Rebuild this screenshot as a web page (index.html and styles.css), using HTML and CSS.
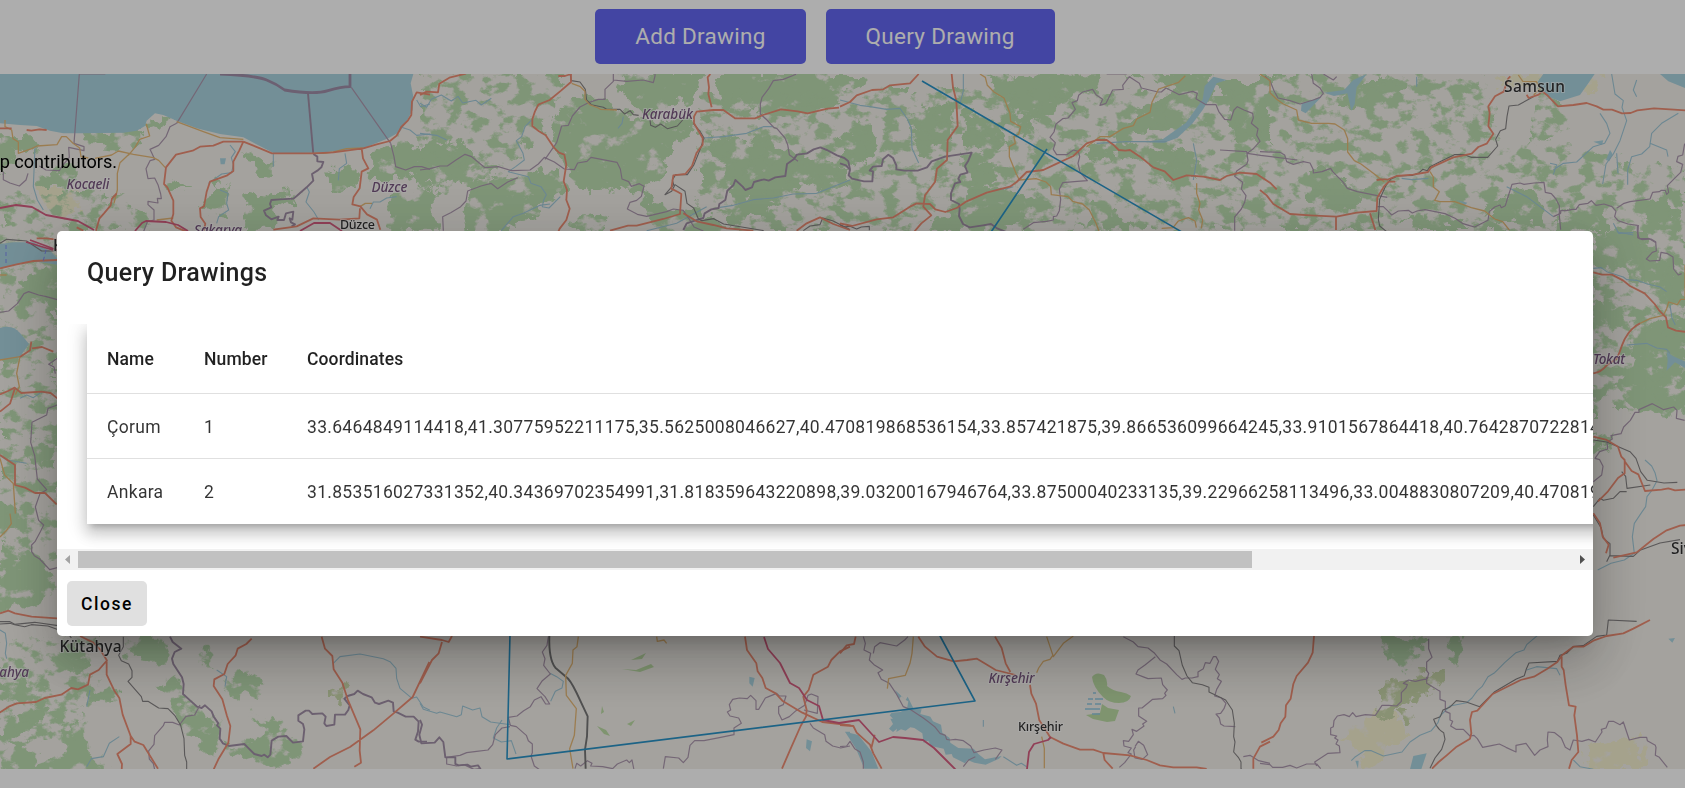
FILE: index.html
```html
<!DOCTYPE html>
<html lang="en">
<head>
<meta charset="utf-8">
<title>Query Drawings</title>
<link rel="stylesheet" href="styles.css">
</head>
<body>
<div class="page">
  <header class="toolbar">
    <button class="tool">Add Drawing</button>
    <button class="tool">Query Drawing</button>
  </header>
  <main class="map">
    <svg class="canvas" viewBox="0 74 1685 695" preserveAspectRatio="none">
      <defs>
        <filter id="dense" x="0" y="0" width="100%" height="100%">
          <feTurbulence type="fractalNoise" baseFrequency=".07" numOctaves="4" seed="4" result="n"/>
          <feDisplacementMap in="SourceGraphic" in2="n" scale="24" xChannelSelector="R" yChannelSelector="G" result="d"/>
          <feTurbulence type="fractalNoise" baseFrequency=".045 .06" numOctaves="5" seed="9"/>
          <feColorMatrix values="0 0 0 0 0  0 0 0 0 0  0 0 0 0 0  9 0 0 0 -2.6"/>
          <feComposite in="d" operator="in"/>
          <feGaussianBlur stdDeviation=".5"/>
        </filter>
        <filter id="sparse" x="0" y="0" width="100%" height="100%">
          <feTurbulence type="fractalNoise" baseFrequency=".07" numOctaves="4" seed="7" result="n"/>
          <feDisplacementMap in="SourceGraphic" in2="n" scale="26" xChannelSelector="R" yChannelSelector="G" result="d"/>
          <feTurbulence type="fractalNoise" baseFrequency=".06 .085" numOctaves="5" seed="3"/>
          <feColorMatrix values="0 0 0 0 0  0 0 0 0 0  0 0 0 0 0  8 0 0 0 -3.9"/>
          <feComposite in="d" operator="in"/>
          <feGaussianBlur stdDeviation=".5"/>
        </filter>
      </defs>
      <rect class="land" x="0" y="74" width="1685" height="695"/>

      <!-- farmland -->
      <g class="farm" filter="url(#dense)">
        <path d="M36 186l40 2 6 24-32 4zM1490 74h112l-8 18-90-6zM1586 746l52-10 10 33h-60zM1340 735l50-30 20 30-40 30z"/>
      </g>

      <!-- woodland -->
      <g class="wood" filter="url(#dense)">
        <g transform="scale(.33333)">
          <path d="M740 590l120-28 0 36 50-20-75 50 0 40-40 24-60 0zM1170 692l-5-72 35-40 110-25 0 137zM1115 450l50-10 40-45 30 45 70 20 0 45-120 35-80 0zM985 510l85-5 0 55-60 15zM110 525l120-35 0 50-110 25zM0 400l90 0 30 40-60 20-60 60zM230 400l200-10 0 30-70 20-110-10zM500 545l75 15-60 22zM730 460l90 30 0 32-50-5zM640 550l50 10-10 80-70-10zM430 365l70-20 20 20-60 20z"/>
        </g>
        <g transform="translate(420 0) scale(.33333)">
          <path d="M0 430l100-10 60 40 70 60-90 20-140 20zM150 570l90-40 90-10 90-20 20 70-80 60-100 60-140 0zM380 400l60-100 60-20 150 70 180 20-50 50-40 50-20 60-40 40 20 50 170 20 40 40-20 30-160 0-40-60-30-70-60-20-80 20-40-20zM580 222l260 0-20 80-150 40-60-60zM880 222l380 0 0 90-140 20-100 10-100-20zM850 430l180-20 100 50 160 50 0 60-130-20-120 60-100-20-30-80zM450 650l80-10 40 50-110 2zM930 620l100-30 60 30-160 60z"/>
        </g>
        <g transform="translate(840 0) scale(.33333)">
          <path d="M0 420l60-60 40 20 30 40-40 60-90 20zM220 340l100-30 20 60-40 80-70 10zM440 230l340-8-20 50-70 0-30 50-70 40-40 40-40-80-30-40zM370 330l80 40 60 30 10 30-60 40-80-30zM840 222l280 0-20 80-60 70-100 30-140 0 140-80 60-60-40-20zM1130 240l160 0 0 190-100-10-20-90zM720 450l170-20 160 30 20 80-90 0-110-70-110 10zM270 692l80-80 60-60 100 20 90 30-60 60-140 30zM760 600l110 70 0 22-120-20zM370 470l110 20-10 50-70 30zM0 222l80 0-20 40-60 20z"/>
        </g>
        <g transform="translate(1260 0) scale(.33333)">
          <path d="M150 500l60 20 50 40 90 20-60 30-100 20-40-10zM300 240l130 0 0 50-120 40-70-20zM420 660l100-20 130 50-200 0zM690 630l50-60 80 10 30 50 0 52-90-20-90-10zM890 650l140-40 20 80-160 2zM1140 610l80-10 50 90-100 0z"/>
        </g>
        <g transform="translate(0 225) scale(.33333)">
          <path d="M60 180l60-50 110-20 0 150-110-30-60-20zM-10 830l40 0 40 50-20 30-60 0zM0 1010l60-40 90 60 20 60-70 60-60-20-60 60zM100 640l60 30-30 60-50-20z"/>
        </g>
        <g transform="translate(0 620) scale(.33333)">
          <path d="M370 50l110 0 30 40-40 40-90-20zM460 210l70-50 20 80 80 40 30 80-20 50-50-60-50-20-10-70-40-40zM680 180l60-30 60 50-20 40-90-20zM750 280l100 30 10 40 50 20-10 60-110 0-100-30-20-30 90-10 40-30zM-20 180l80 0 60 60-120 0zM60 260l90 10-30 60-100 20zM0 390l90 0 20 40 70-20 20-80 50-30 20 100 50 50-60 20-240 0zM160 80l80 0 30 60-80 20zM590 90l40 10 10 50-40-10zM260 195l80 15 0 35-70-5z"/>
        </g>
        <g transform="translate(1260 620) scale(.33333)"><path d="M370 40l120 10 0 40-60 50-50-20zM560 40l60 0-10 60-20 40z"/></g>
        <g transform="translate(1400 225) scale(.33333)">
          <path d="M580 20l140 0 60 80 80 50 0 100-60-20-80-70-80-40-60 0zM690 290l170-20 0 300-180-20-40-70 60-60zM580 230l80 20-20 60-60-20zM580 500l70-10-40 40-30 0zM580 640l60-20-30 50-30 10z"/>
        </g>
      </g>
      <g class="wood" filter="url(#sparse)">
        <path d="M420 74h150l-30 60-60 60-60-10zM700 90h560v141h-560zM1260 74h220l20 60 50 50 40 47h-330zM1500 150l60-10 60 20 65 10v61h-140zM1593 231h92v180h-92zM0 190h90l60 20v21h-150zM0 231h57v330h-57zM1540 84l40 40-50 20zM0 637h100l-20 100-80 10zM30 400h28v110h-28z"/>
      </g>
      <g class="scrub" filter="url(#dense)">
        <path d="M1380 685l40-10 25-8-5 20-35 18-25 16zM1400 710l14-4-6 20zM328 690l16-6-4 20z"/>
      </g>
      <g class="heath">
        <path d="M1092 677q4-6 12-2 4 5 3 11 6 5 14 6 6 1 10 4-2 7-12 7-10 0-16-6-10-10-11-20zM1086 715l14-2 2-9 6 4 11 2-4 11-8 1-14-3zM631 660l15-7-4 6zM622 669l14 1 15-6 3 3-14 5zM597 726l9 4 4 6-6-2zM627 724l8-4-4 6zM602 706l2 6-3 2z"/>
      </g>

      <!-- water -->
      <g class="water">
        <g transform="scale(.33333)"><path d="M0 222H1240L1232 250 1240 290 1238 330 1222 360 1200 395 1165 415 1090 445 960 458 822 460 730 412 660 402 590 385 530 362 490 345 465 340 440 362 435 378 410 392 370 398 250 400 190 400 150 392 110 378 60 375 0 370zM660 475l18 0-4 18-12 0zM0 732l40-5 60 0 50 25 22 22 0 20-70-10-104 20z"/></g>
        <path d="M0 328q12-4 20 5l9 11-10 14-19 2z"/>
        <g transform="translate(1260 0) scale(.33333)"><path d="M850 222H1004L985 250 960 285 900 304 860 288 830 250zM1200 222h75v42l-50-20zM280 240l40-18-30 40-6 50-10 20-12-52-40 8-30-10 60-8zM125 310l60-20-48 50-14-8zM1000 425l30-4-4 14zM590 600l32 8-6 6zM1050 450l8 12-10 22-10-4z"/></g>
        <g transform="translate(840 0) scale(.33333)"><path d="M1120 230l40 10-30 10-26 54-16 26-30 40-46 44-40 14-60-2 56-8 70-50 50-70 6-40z"/></g>
        <g transform="translate(840 620) scale(.33333)"><path d="M165 210l12 26 8-8 12 12 6-10 18 36 24 2-4 14 30 8 8 14 24 10 4 24 22 16 2 14 24 16 46 2 14 16 20 16 50-10-8 8-40 18-34-6-20-8-8 10-36-18-4-10-18 2-6-18-38-8-8-16-14 6-4-28-24-16-12-2-14 10-14-4-14 8 2-10-12 10-12-10 12-14-8-16 8 0-10-10 6-8 26-2 20-10 4-22-8-4zM15 335l40 10 40 50 20 51-42 0-25-60z"/></g>
        <g transform="translate(1260 620) scale(.33333)"><path d="M460 408l40-8-16 48-34 0zM286 422l10 0-2 24zM1225 56l20-2-8 14z"/></g>
        <g transform="translate(420 620) scale(.33333)"><path d="M988 170l16 4-6 26-10-10zM1160 358l16 6-6 30-12-10zM1276 335l14 0 0 18z"/></g>
        <g transform="translate(1400 225) scale(.33333)"><path d="M800 380l20 14 40 18 0 20-35-20-25 25 3-30z"/></g>
      </g>
      <path class="marsh" d="M1088 699h5M1095 699h8M1087 704h5M1095 704h6M1085 709h15M1092 714h8M1093 693h3"/>
      <g class="stream">
        <g transform="scale(.33333)"><path d="M690 435l16 20-12 18 6 20-5 25-30 4-40 28M660 570l24 10-4 30 6 20-30 20-6 20M1035 460l5 30-22 16-3 35M1190 590l-30 4-20 12-20 0-10 20M920 560l8 16-10 30 24 30 14 24M1250 300l12 20 28-8M1200 380l30 10 20 16 40-4M105 440l-5 120 12 40 18 30M820 460l0 40"/></g>
        <g transform="translate(420 0) scale(.33333)"><path d="M0 310l20 12 14-24 30-13 30 18 20-14 14 20 40-8 16 14 30-20M335 360l-20 20-10 30-16 12 20 38 4 20-26 20-22 15 60 15 8 20 30 10 16 24-8 16-4 20 20 4 34-34M390 612l-30 4-50 24-30 10-36 42M0 400l50 6 30 14M1060 380l-30 0-50 20-70 10-60 4M1290 540l-40 16-60 24-70 2-60 12-60 5-60 17-40 6M680 692l90-22 90-50M610 350l-4 20-12 15"/></g>
        <g transform="translate(840 0) scale(.33333)"><path d="M370 222l0 50-10 40M0 300l60 16 30 4 50 8 40-3 22 32 12 28 2 60 20 44M520 560l-20 6-40 4M1060 540l10-60-10-50M980 425l-120 0-90 5"/></g>
        <g transform="translate(1260 0) scale(.33333)"><path d="M1055 222l10 60 25 20-4 20 14 40-20 60-20 40-22 30-10 60M1020 340l20 30 10 30-16 30-34 10-50 46-40 4-30 20M1255 340l-50 30-30 30-6 40-24 22-30 8-12 40 0 44M740 560l60 30 80 60M1130 240l-10 30 10 20M470 230l0 30M1060 670l16 30 44-2M1170 430l50 20 4 20M425 535l30 4 50-4M1070 460l4 60M870 490l20 4-10 30"/></g>
        <g transform="translate(0 225) scale(.33333)"><path d="M0 690l20 15 60 10M60 520l20-10 20 8 20-14 20-4"/></g>
        <g transform="translate(0 620) scale(.33333)"><path d="M0 30l16 10 4 30-4 30 4 16M260 440l14-24 36-6 18-40 30-20M1000 130l20-20 60-8 70 14 20 9 18 20 2 30 10 30 36 30 14-4 20 30 20 10M675 200l5-30-30-20M270 210l-10 50"/></g>
        <g transform="translate(420 620) scale(.33333)"><path d="M0 250l10 18 40 12 10-4 50 14 14-6 4-26 30 12 22-6 6 26 26 16 60 8M246 300l-16 24-10 30 24 12 30-4 14 40M390 160l20 10 20 14-4 20-20 10-14 30"/></g>
        <g transform="translate(840 620) scale(.33333)"><path d="M490 410l40 26 14-6 16 10M1000 260l5 20M430 300l0 20"/></g>
        <g transform="translate(1260 620) scale(.33333)"><path d="M840 40l-40 34-8 16-24 8-34 30-20 20-10 10-20 12-18 30-14 12-16 22-16 14-50 10-30 30-6 20-20 24-34 14-30 20-24 30-56 12-36-16-20 0-30 20-10 10M800 150l30-10 60 6 10 20M940 420l20 20 40 8"/></g>
        <g transform="translate(1400 225) scale(.33333)"><path d="M580 130l24-2 16 12 50 16 10 8 30 2 30 10 40 10 20 14M680 360l60-5 30 14 30 4 10 12M735 705l20 18 10 20 6 24-16 30-14 18-4 30-14 20-20 30-6 40 6 50-30 20-40 10-40 20M810 240l6 40 10 20M650 20l50 10"/></g>
      </g>

      <!-- province borders -->
      <g class="border sea">
        <g transform="scale(.33333)"><path d="M238 222L222 430M620 222L530 370M1054 262L1172 430M240 222l76 0"/><path class="thick" d="M660 222q110 5 140 18 30 12 54 30 90 15 130 2 40-12 66-12V222"/><path class="wide" d="M924 280L940 462"/></g>
      </g>
      <g class="border">
        <g transform="scale(.33333)">
          <path d="M222 430l30 10 0 12-46-10 2 30-20 24-10 16-40-2-20-12M10 515l0 24 20 10 28 9 20-18 6-20M530 370l-20 10-12 30-22 26-26 12 5 10 9 20-14 4-12 24 6 30 20-2 10 20 8 28 2 14-12-1 2 14-30-5 0 10 18 16 0 30-20 5-14 37M1172 430l10 40 5 30 30 10 26-10 22 0 25 8"/>
          <path class="wide" d="M940 462l12 8 0 14 18 2-6 16-12 10-16 10 4 20-20 20-30 26-10 8-40 2-26 2-4 12 4 10-22 10 6 14 16 12 22-8-4 10 20 0 6-20 22-5-3 24-8-4 4 12 12 6-10 6"/>
        </g>
        <g transform="translate(420 0) scale(.33333)">
          <path d="M0 510l30-4 30-8 22 0 26-18 27-17 20 7 40 33 40-3 40 12 55-2 25-18 18-20 30 14 30 21 30 2 10-20 28-5 12-12 78 15 10 20 5 30 20 8 8 14 24-8 14 8-8 30-14 12-20 6-8 20 30 16 28 6 60-14 20-8 30 4 20 30 12 20 28 12M375 478l35-50 15-50 20-2 12-28 23-27 25-13 30-10 20 0 0-30 25-24 0-26M580 240l40 4 50-4 30 8 5-20 0-6M70 692l-2-42 24-12 30-18 16-17 5-30 40-15 30-8 20 16 30-20 30-13M1130 222l-40 16-30 4-14 24-20 26-5 20 0 30 20 18 20 22 10 4 24 28 8 20 5 30 26 20"/>
          <path class="wide" d="M790 690l10-20 36-12 14-4 4-14 20-12 22-4 2-12 18-12 6-28 18-16 6-16 22 20 8 10 20-8 6-16 30-8 14 4 20-10 30-4 5-36 20-14 10-14 30-4 20-12 20-6 20 8 30 16 22 8 12 10 5 24"/>
        </g>
        <g transform="translate(840 0) scale(.33333)">
          <path class="wide" d="M0 490l18 6 12 14-4 16 10 10 36 8 25 0 2-30-10-2 10-12 26-2 4-20 16-14 14 10 10 22 0 12 24 4 40 0 28-10 14-18 40-14 80-12-10 24-10 16 8 20-22 6-6 12 6 10-16 4-12 30 0 20 24 12 2 16-2 20 12 24 20 10 40-6 24-4 20 14 40 16 10 0"/>
          <path d="M550 688l30-20 40-4 20-4 0-10 10-2 8-16 4-34-4-30 10-20 44-4 30-2-22-26-6-26 5-20-4-16-15-4-20 14-30 0-10-16 6-20-16-16 12-16 6-24 20-16 16-2 22-26-10-20 16-6 4-16 12-10 30-8 10 16 20 14-8 18 18-6 20-40 32-2-2-12 20-26 30 20 6 14 50 12 10 0 14-12 40 20 40-10 14 6-4 16 30 18 30 0 8 20 18 24 18 2 10-30 10-10 20 10 26 10 2 14-6 16 20 16-4 20 10 18-22 24-16 12 40 6 110 14M1140 450l80 5 4 26-4 12-30 20-6 16 24 18-4 20 14 20-4 20-10 20-20 24 0 41M800 222l60 0"/>
        </g>
        <g transform="translate(1260 0) scale(.33333)">
          <path d="M0 455l60 2 14 8 6 20 20 8 30-8 20 4 10 20 0 10 26-4 26-10 6 10 30 30 14 20 30 10 60 12 30 5M350 620l20 0 15 14 10 11 20-12 30-2 12 8 14-6 24-4 60 12 30 14 24 16 20 6 15 4 40-20 4-26 16-14 16-6 4 8 12-6 6-20 14-44 24-4 12 4 30-4 30-2 4 30 18 4 14 16 10 20 0 30 4 42M880 650l22-10 0-8 16 0 20-4 10 0 10-14 26-4 10-8 14 14 24-4 24 8 12 14-4 16 10 12 30 10 28 4 0 20 6 20 30 0 20 12M1070 625l20-14 20-6 60-8 8-20 20-2 6-4 12 0 4 12 6-6-4-20 30-30 10-10 6-24-18-8 4-16 14-4 6-34M155 222l5 28 20 14 10 16-10 12-20 8-40 12-30-10-36-8-12-22-12-30-16-14M190 222l30 18 10-10"/>
        </g>
        <g transform="translate(0 225) scale(.33333)"><path d="M0 262l26-4 26-22 20-30 14-6 30 10 20 4 36 10M172 540l-28 10-4 20-44 22-4 60 12 40 8 70 28 32-20 12-14 40 10 40 15 14-10 20-16 30-10 10 0 20 8 12 16 10 30 32 23-6M172 400l-26 18 16 8 4 20"/></g>
        <g transform="translate(0 620) scale(.33333)">
          <path class="wide" d="M510 50l8 16 26 20-20 10-8 20 4 16 26 40 5 20-2 30 22 20 20 18 14 4 10-8 20 18 6 16 14 20-4 6 10 10-2 30 10 14 18 8 46-6 10 10 20 20 22 6 8-4 10 8 8-8 4-42 20-12 24-2 6 6 14 14 30-4 4-36-4-16-14-10 0-16 22-14 10 0 10 10 30-2 10 10-4 20 6 8 24-4 2-30 30 0 10-14 4-14-16-20 10-8 20-6 10-10 16 10 26 10 10 16 12 4 28-10 14 6 2 26 12 4 24 12 24 0 15 15-2 30-8 24 10 6 25 0"/><path d="M600 255l-16 30-26 4-20 26-20-8-24 0-4 10-26 30-2 26-16 20 2 24 12 14 4 18"/>
        </g>
        <g transform="translate(420 620) scale(.33333)">
          <path d="M385 50l-4 26-14 20 8 20-4 20 20 26-24 20-16 24 24 24 14 22-12 0-14-22-20 10-12 20-20 12-20 16-26 4 6 24 18 4 30 26 6 16 12 10 0 26-4 10 10 30 20 14M270 320l-24 4-20 20-8 30-14 16-34 4-30 4-20 8-40 6 0 20 30 6 22-4 30 14 16-2M465 446l5-16 12 8 20-16 14 8-4 8 36 2 30 6 14-14 28-12 8 8 8-8 6 30M730 446l6-36 40 4 14 14 14-16 6-36 14-14 28 0 50-10 40-8 0-20 22-14-8-16-26-6-8-12 10-6-4-16 10-16 20-4 24 2 10-10 16 16 0 26 8 0 20-34 10-4 24-10 8 8 20 0-8 26-14 6 0 20 10 20 22-10 20-18 26-16 10-30 10-4 20 8-2 50-40-10M1170 310l10 14 34 20 4 20 20 14 24 6 28-6"/><path class="wide" d="M0 300l6 14-8 30 6 26 40-2 14-16 12 14 6 46 30 0 0 20 10 4 26-2 10 6 22-4 8 12"/>
        </g>
        <g transform="translate(840 620) scale(.33333)">
          <path d="M70 50l6 20-4 20 20 10-4 20 14 14 26 16-14 8 10 20 24 12 20 30 22 40 20 8 40 26 34 26 16 20 16 6 4 12 10 2 16-2 24 4 22 16 10 20 30-8 34-6 20 6-20 28M100 100l4-20 16-12 50 10 24-18 10-10M0 380l20-2 10-14 14 22 16 10 10 30 0 20M370 440l16-20 20-10M850 50l30 16 14 14 30 4 20 16 16 20 20 12 30 32 16 14 10-4 20 0 18-4 0-14 16-10 6-18 14 2 10-20 8 0 8 14-10 24 12 16-6 12 12 8-14 24-6 20 20 6 14 16-6 16-10 14-14 2 10 12 4 18 10 6 34 2M946 110l-30 24-22 16-6 12 20 8 16 6 40-2 4 20 14 16-8 10 4 6-10 10-30 2-32 26-10 0 0 24 24 16-12 8 4 6-22 16-14-6 4 16-14 20-16-2 2 16 22 6-10 14 10 4-20 26-16 14M885 380l10-16 16 12 12 28-16 14-22-4-4-24 6-10M1210 410l20-4 26 16 34 8"/>
        </g>
        <g transform="translate(1260 620) scale(.33333)">
          <path d="M0 430l30 4 8 8 30 0 22-6 20 8 30-12 30 0 12 14M170 438l-6-12 40-26 36-2-2-20-10-6 6-12-10-6 6-6-18-4 0-20 8-4 2-18 10-14 20-4 16 6 10-12 10 12 28-6 30 2 20-30 20 0 24 2 14-14 0-26 14-14 4-10-12-4 16-10 20 4 36-8 4-16-6-8 0-26 16-14-10-26 0-30M500 170l0 20 40 24 0 24 16 6 0 30 14 6 0 20 8 4-6 14 16 10 22 0 20 20 12-2 10 10 16 26 30-6 20-4 20 10 30 14 0-20 30-6 26 36 16-16 24-10-2-20 2-24 20 2 20 16 12 28 14 8 10-30 26 4 20-6 20 8 20-30-2-8 14-4 8-20 14 0 20 10 10-8 10 30 8 24 32-8 20 0 2 10 24 14 2 6-2 24 12 6 24 30"/>
        </g>
        <g transform="translate(1400 225) scale(.33333)"><path d="M580 770l25-20 4-26-10-20-14-4 14-20 24-8-2-20 16-10-4-10 30-6 8-20 20-20 14-24 12 0 0-8 40-18 34 18 30-8 10 10-2 24 25 6M715 0l-2 38 14 6 26-2 14 8 2 28-12 4-18 20 10 6 30-2 4-24 20 4 16 10 2 36 14 18 10-4"/></g>
      </g>

      <!-- rail -->
      <g class="rail">
        <g transform="translate(420 0) scale(.33333)"><path d="M450 222l4 20 26 4 16 22 4 32 14 14 36 8 10 6 40 0 14 14 16-10 10 12 16 2M690 360l2 16 14 6 16-10 20 14 30-8 16-18M820 370l20 24 12 20-10 30-20 50-20 30-35 0-10 16 4 14-26 30 20-10 10-20 30 20 6 36 20 14 14 32 10 6 36-6 30 16 120 20M1150 692l20-14 30-4 8-20 30 8 50 26"/></g>
        <g transform="translate(840 0) scale(.33333)"><path d="M0 675l10 6 20-2 20 8 14-6 24-2 0 12"/></g>
        <g transform="translate(1260 0) scale(.33333)"><path d="M820 290l-45 25-28 3-6 32-4 36-16 6-14 26 6 20-30 34-50 0-20-8-30 0-40 20-33 16-8 12-14-4-10 10-20 8-46 2-20 10-15 20-18 40-4 60 4 20 20 16"/></g>
        <g transform="translate(0 225) scale(.33333)"><path d="M0 55l20-12 60 5 45 30 47 0M0 1190l30 0 14 8 60-6 70 10"/></g>
        <g transform="translate(0 620) scale(.33333)"><path d="M0 12l30-2 14 4 30 6 20-6 50 4 60 22 10 14M370 50l0 30-14 26 8 16 22 10 10 20 0 20-12 12 40 46 4 14 16 0 32 20 28 2 20 20 18 30 10 40 2 50 6 20 0 40"/></g>
        <g transform="translate(420 620) scale(.33333)"><path class="main" d="M388 48q-2 70 18 95l30 26q14 8 34 50l33 70-2 60-6 40 2 57"/></g>
        <g transform="translate(840 620) scale(.33333)"><path d="M1003 48l0 30 14 14 10 44 14 32 16 20 30 6 20 8 0 14 30 14 20 10 20 30 6 40-2 40 4 16-4 30 14 16 8 14 0 20 10 10"/></g>
        <g transform="translate(1260 620) scale(.33333)"><path d="M1130 4l-85-4-5 45-30 4-40 28-30 3-20 20-20 6-8 18-85 5-8 18-6 20-24 10-65 38-25 25-20 20-40-14-30-4-20 20-20 8-8 20-20 8q10 30 30 40l4 20-10 30-20 26-15 31"/></g>
        <g transform="translate(1400 225) scale(.33333)"><path d="M580 645l40 6 30 12 40 17 18 20 14 40 20 26 50 8 40-2M665 740l12 14 4 36 70-10M580 845l20-25 10 6 30-6 20-20 20 0M580 870l24 40 6 30 20 16 0 36 70 2 20-18 60-22 60-10M630 990l-10 20"/></g>
      </g>

      <!-- secondary roads -->
      <g class="second">
        <g transform="scale(.33333)"><path d="M15 360l0 20 20 10 4 26 16 10 0 34 40-14 16-8 60-4 14-24 14 0 20 20 20 14 4 26 22 4M285 475l50-10 20-12 45 10 60 10 16 8 20 22M385 466l20-24 14-24 30-10-10-36M390 460l-30 28-8 32 0 50-10 40M530 365l80 30 50 18 70 5M940 460l30 0 30-4 40-10 50-2M470 660l50-6M1080 620l16-10 20 0"/></g>
        <g transform="translate(420 0) scale(.33333)"><path d="M455 250l26 10 14 14 0 24 14 16 26 10 6 4 50 2"/></g>
        <g transform="translate(840 0) scale(.33333)"><path d="M420 222l16 10 6 24 20 20 30 18 18 46 2 24 30 16-6 22-14 8 4 20-18 10 0 30 20 50 10 20 50-4 30 10 14 14 2 24 50 6 14 14 30 8 20 18 20 40 12 32M740 440l40-30 30 0 40-25 30-8 10-20 40-20 6-30 20-40 60-20 20-20M1070 550l0 30 10 30-4 20 12 30-4 25M965 685l34-2 16-20 30-10 20 10 4 20"/></g>
        <g transform="translate(1260 0) scale(.33333)"><path d="M0 222l30 20 0 36 20 20 20 14 40 18 5 30 40 10 50 0 20 2 28 18 10 26 0 40 20 26 20 10 40 30 30 24M510 515l10 16 0 30 18 14-14 26 16 4 44 0 50 18 40 10 30 24 24 8 20 25M775 225l14 20 40 0 12 20-20 20"/></g>
        <g transform="translate(0 225) scale(.33333)"><path d="M0 405l60-10-10 50 8 40-12 24M0 700l14 50 26 26 6 90M30 866l4 30-14 20-20 20M0 150l20 0"/></g>
        <g transform="translate(420 620) scale(.33333)"><path d="M475 50l-4 30-12 10-2 40-20 36 2 60 30 40-6 80-14 40 10 60M710 50l2 14 20-4 8 10"/></g>
        <g transform="translate(840 620) scale(.33333)"><path d="M220 50l-4 50-6 30-14 36-50 10-4 30M620 50l20 60 30-40 30-22M640 104l-10 14-20 6-14 20-6 14M605 350l8 35 0 60"/></g>
        <g transform="translate(1400 225) scale(.33333)"><path d="M720 295l30-14 40-10 10-20 6-20 26 8 10-16 20 0M855 220l0-100"/></g>
      </g>

      <!-- primary roads -->
      <g class="prime">
        <g transform="scale(.33333)"><path d="M0 385l35 0M80 390l14 2 24-4 22 2M730 425l-12 26-18 34 0 28-20 14-50 18-10 30-8 44-12 6 2 26 14 20-4 20M730 425l50 20 36 15 65 0 59 0 60-3 90-12 40-12 40-10 20-16 14-26 20-20 10-16 2-40 14-28 40 7M730 425l-60 0-30 12-40 3-22 12-50 12-30 38-6 50 10 10 18 40 0 40-6 20 14 20 40 16M1085 445l4 30 16 30-20 10-6 50-18 26-4 22 24 6 20 24 30 16 10 30M350 580l-14 16-4 20-20 24-14 16-10 36M1080 625l-2 30-60 4-78-4-50 24-70 10M230 682l20 10"/></g>
        <g transform="translate(420 0) scale(.33333)"><path d="M0 285l20-10 34 2 4-26 30-18 50-12M415 228l20 0 18-6 0 24-30 26-34 28-34 14-10 20-8 24 0 20 20 16 20 12 24 36 16 16 16 6 6 30-8 50 10 26-2 30 10 26-10 34-20 26-8 18M570 692l54-15 26 0 80-20 50-15 4-60-10-6-20-10 6-40 36-4 20-24 14-40 18-24 0-20-26-44 0-20 8-15 50-5 30 0 35 25 60 0 24-10 54-17 50 6 30 6 60-14 34-3M875 322l-10-40 2-20-4-30 8-10M1130 692l30-22 40-18 40 20 50 18M790 640l40 24 50 11 40 10 80 7"/></g>
        <g transform="translate(840 0) scale(.33333)"><path d="M0 320l30-14 20-20 46-16 34-2 20-12 60-6 26-28M335 222l4 40 10 40 4 76-30 42-2 60-30 26-6 40-30 40-5 34 24 26-30 24-22 26M0 670l36 8 74-20 50-6 50-32 20-10 40 2 16 16 30 8 34-12 30-20 60-26 70-18 20-14 30-30 50-6 34-16 56-26 40-38 30-10 30 0 20 14 16 16 20 2 14-2 30 20 40 32 34 12 26 26 40-14 50 4 50 10 20-12 40-10 50 4 40 26 20 20"/></g>
        <g transform="translate(1260 0) scale(.33333)"><path d="M0 570l20 16 20 26 50 30 60 4 80 4 60-12 60-5 2-40 20-34 14-14 20 0M330 640l16 50M228 650l0 40M350 540l16-2 14 0M380 540l30-12 50-4 44-8 10-14 66-30 30-6 25-5 20-20 25-10 20-30-15-22 4-40-4-20 20-30 26-14 14-40 6-6M800 284l6 10 30-10 10-10 14 10 34 35 46-4 40-6 30 10 20 10 26 0 30 11 26-1 20-8 50-6 60 4 34 2"/></g>
        <g transform="translate(0 225) scale(.33333)"><path d="M0 130l50-12 50-10 72-3M110 40l30 0 30 4M0 508l24-10 20-10 20 16 60-4 28 4 20 16M0 560l30-24 14-44M0 690l45 30 0 60 30 8 30 16 30 0 35 34M60 396l30-20 4-26M96 370l30-4 34 14M0 1165l25-8 20 8 50 10 76 5"/></g>
        <g transform="translate(0 620) scale(.33333)"><path d="M240 48l40 20 20 20 20 32 0 44 24 50 14 20 10 50 24 64 0 24-40 30 14 30-2 36M390 345l14 20 26 10 44 71M322 120l-26 30-26 14-6 30-30 14-20-4-30 20-50 10-26 12-58 4-24 10-30 20-16 20M755 56l-16 16-26 14-6 20-24 26-10 30-30 16-2 20 26 40 14 50 10 30-6 50-30 50-14 30 0 16M965 50l10 36 22 22 4 40 26 40 16 50 38 90-2 64 4 36-20 12M940 446l50-35 60-30 70-50 60-50 58-50 50-105"/></g>
        <g transform="translate(420 620) scale(.33333)"><path d="M0 190l36-70 20-20 10-34M0 50l66 10 20 6 10-18M975 50l6 40 28 40 4 24 14 20 10 30 30 16 20 22 60 36 60 28 85 10M1290 80l-30 14-26 26-10 20-44 24-14 46-16 20 10 40-2 20-16 28-30 68-26 60"/></g>
        <g transform="translate(840 620) scale(.33333)"><path d="M0 100l20-24 22-4 5-22M235 50l20 30 36 30 50 14 40-4 30-4 30 18 26 16 60 15M465 50l20 34 12 46 14 26M570 195l4 26 14 30 10 50 26 40 6 10 40 20 50 18 40 0 30 10 80 7 50 14 40 16 40 6 70 0 30 5M790 400l4 20 24 26M0 315l40 3 10 20 40 36 10 26 25 46M104 344l-10 40M1240 446l0-30 20-36 30-15"/></g>
        <g transform="translate(1260 620) scale(.33333)"><path d="M162 48l-4 50-14 30-34 40-10 24-8 44-14 20-2 34-14 20-6 20-16 20-36 18M1170 0l-50 26-30 14-50 8-40 14-30 18-30 0-34 26-14 20-30 20-40 24-40 10-60 30-24 12-46 50-16 4-6 24 4 40-4 16-40 24-30 26-24 20-20 20M905 110l0 30 6 10 6 46 10 60 20 4-4 26 8 60 4 50-20 24-8 26"/></g>
        <g transform="translate(1400 225) scale(.33333)"><path d="M580 142l26 7 30 0 34 18 20 16 44 22 30 32 14 20 20 20 6 30 24 10 32 4M580 445q24-4 40-24l30-20q10-20 16-40 16-46 54-66M580 635l40 10 34 20 10 30 10 10 0 40-20 14-30 40-30 30M675 710l20 28 20 10 20 50 50-4 20-4 20 6 30-2M580 865l20 30 8 40 18 24-8 26M640 998l70-16 50-40 40-26 40-14 20-2"/></g>
      </g>
      <g class="motor">
        <path d="M0 208l16-3 16 2 14 8 32 6 16 9M135 231l7-8 4-2 20 1 12 3 10 6M300 231l14-8 16 0 12 8M764 637l4 12 12 14 10 20 9 5 8 12 12 6 4 14 16 3 20-3 20 22 14-5 12 1 18 2 11 8 14 14 8 8 10 1M1027 769l2-17 5-8 14-4 3-3M26 242l27 8M30 240l27 10"/>
      </g>
      <path class="ferry" d="M6 245v20M46 250l-3 12"/>

      <!-- drawn shapes -->
      <path class="drawn" d="M922 81L1280 289M1047 149L985 241M510 634L507 759 975 701 939 634"/>

      <g class="region">
        <text x="66.500" y="189" textLength="43">Kocaeli</text>
        <text x="371.500" y="192" textLength="36">Düzce</text>
        <text x="194" y="235" textLength="48">Sakarya</text>
        <text x="642" y="119" textLength="51">Karabük</text>
        <text x="988.500" y="683" textLength="46">Kırşehir</text>
        <text x="1593" y="364" textLength="32">Tokat</text>
        <text x="-21" y="677" textLength="50">Kütahya</text>
      </g>
      <g class="city">
        <text class="small" x="340" y="229" textLength="35">Düzce</text>
        <text x="1504" y="92" textLength="61">Samsun</text>
        <text x="59.500" y="652" textLength="62">Kütahya</text>
        <text class="small" x="1018" y="731" textLength="45">Kırşehir</text>
        <text x="1671" y="554">Sivas</text>
        <text x="53" y="251">Kocaeli</text>
      </g>
    </svg>
    <div class="credit">© OpenStreetMap contributors.</div>
  </main>
</div>

<div class="scrim">
  <section class="dialog">
    <h2 class="title">Query Drawings</h2>
    <div class="content">
      <table class="grid">
        <colgroup><col class="c-name"><col class="c-number"><col></colgroup>
        <thead><tr><th>Name</th><th>Number</th><th>Coordinates</th></tr></thead>
        <tbody>
          <tr><td>Çorum</td><td>1</td><td>33.6464849114418,41.30775952211175,35.5625008046627,40.470819868536154,33.857421875,39.866536099664245,33.9101567864418,40.76428707228141</td></tr>
          <tr><td>Ankara</td><td>2</td><td>31.853516027331352,40.34369702354991,31.818359643220898,39.03200167946764,33.87500040233135,39.22966258113496,33.0048830807209,40.47081986</td></tr>
        </tbody>
      </table>
    </div>
    <div class="scrollbar">
      <svg class="arrow off" viewBox="0 0 21 21"><path d="M13 6v9L8 10.500z"/></svg>
      <div class="track"><div class="thumb"></div></div>
      <svg class="arrow" viewBox="0 0 21 21"><path d="M8 6v9l5-4.500z"/></svg>
    </div>
    <footer class="actions"><button class="close">Close</button></footer>
  </section>
</div>
</body>
</html>
```
FILE: styles.css
```css
* { box-sizing: border-box; }
body { margin: 0; height: 788px; overflow: hidden; background: #fff; font-family: Roboto, "Liberation Sans", sans-serif; }
button { font-family: inherit; border: 0; }
.page { display: flex; flex-direction: column; height: 788px; }
.toolbar { display: flex; justify-content: center; gap: 20px; height: 74px; padding: 9px 35px 10px 0; }
.tool { height: 55px; padding: 0 40px 2px; border-radius: 5px; background: #6366f1; color: #fff; font-size: 22.5px; letter-spacing: .28px; }
.map { position: relative; height: 695px; overflow: hidden; }
.canvas { display: block; width: 100%; height: 695px; }
.credit { position: absolute; top: 76px; right: 1568px; font-size: 18.1px; line-height: 24px; white-space: nowrap; color: #000; }

.land { fill: #f2efe9; }
.farm { fill: #f3efcf; }
.wood { fill: #bbdcb0; }
.scrub { fill: #cad8ac; }
.heath { fill: #bbdba4; }
.water { fill: #aad3df; }
.canvas path { vector-effect: non-scaling-stroke; }
.stream path, .border path, .rail path, .second path, .prime path, .motor path, .marsh, .drawn, .ferry { fill: none; stroke-linejoin: round; }
.stream path { stroke: #a0c8d8; stroke-width: 1.1; }
.marsh { stroke: #93c8e0; stroke-width: 1.3; }
.border path { stroke: #ac98ae; stroke-width: 1.2; }
.border path.wide { stroke: #a08ea5; stroke-width: 1.9; }
.border path.thick { stroke: #a08ea8; stroke-width: 2.8; }
.rail path { stroke: #858283; stroke-width: 1.1; }
.rail path.main { stroke-width: 1.9; stroke: #777; }
.second path { stroke: #e5b877; stroke-width: 1.3; }
.prime path { stroke: #ec8c73; stroke-width: 1.8; }
.motor path { stroke: #d65e80; stroke-width: 1.8; }
.ferry { stroke: #7f8df0; stroke-dasharray: 4 3; }
.drawn { stroke: #2a93c6; stroke-width: 1.6; }
.region text, .city text { font-family: "Noto Sans", sans-serif; font-weight: 500; stroke: rgba(255,255,255,.55); stroke-width: 2px; paint-order: stroke; }
.region text { font-size: 13.5px; font-style: italic; fill: #79577f; }
.city text { font-size: 15.5px; fill: #333; }
.city text.small { font-size: 12.5px; }

.scrim { position: fixed; inset: 0; background: rgba(0,0,0,.32); padding: 231px 92px 0 57px; }
.dialog { display: flex; flex-direction: column; width: 1536px; height: 405px; border-radius: 5px; background: #fff; overflow: hidden; color: rgba(0,0,0,.87); box-shadow: 0 14px 19px -9px rgba(0,0,0,.2), 0 30px 48px 4px rgba(0,0,0,.14), 0 11px 58px 10px rgba(0,0,0,.12); }
.title { margin: 0; height: 93px; padding: 22px 30px 0; font-size: 25px; line-height: 40px; font-weight: 500; letter-spacing: .31px; }
.content { height: 225px; padding: 0 0 25px 30px; overflow: hidden; }
.grid { width: 1880px; table-layout: fixed; border-collapse: separate; border-spacing: 0; background: #fff; font-size: 17.5px; box-shadow: 0 6px 6px -4px rgba(0,0,0,.2), 0 10px 13px 1px rgba(0,0,0,.14), 0 4px 18px 3px rgba(0,0,0,.12); }
.c-name { width: 97px; }
.c-number { width: 103px; }
th, td { padding: 0 20px; text-align: left; white-space: nowrap; border-bottom: 1px solid rgba(0,0,0,.12); }
th { height: 70px; font-weight: 500; letter-spacing: .12px; }
td { height: 65px; padding-top: 1px; font-weight: 400; letter-spacing: .31px; color: rgba(0,0,0,.8); }
tbody tr:last-child td { border-bottom: 0; }
.scrollbar { display: flex; height: 21px; background: #f1f1f1; }
.arrow { width: 21px; height: 21px; fill: #505050; }
.arrow.off { fill: #a3a3a3; }
.track { flex: 1; padding: 2px 0; }
.thumb { width: 1174px; height: 17px; background: #c1c1c1; }
.actions { padding: 11px 10px 10px; }
.close { display: block; width: 80px; height: 45px; padding: 0; border-radius: 5px; background: #e0e0e0; color: #000; font-size: 17.5px; font-weight: 500; letter-spacing: 1.55px; }
```
